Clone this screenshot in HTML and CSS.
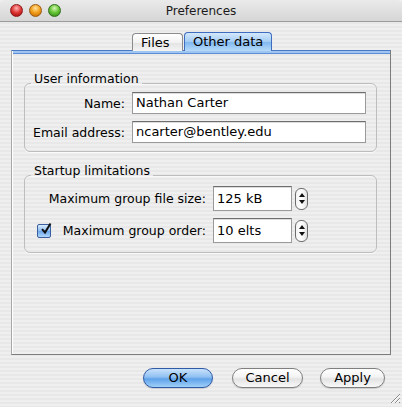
FILE: index.html
```html
<!DOCTYPE html>
<html>
<head>
<meta charset="utf-8">
<link rel="stylesheet" href="styles.css">
</head>
<body>
<div class="window">
  <div class="titlebar">
    <div class="lights">
      <span class="light red"></span>
      <span class="light orange"></span>
      <span class="light green"></span>
    </div>
    <div class="title">Preferences</div>
    <div></div>
  </div>

  <div class="tabs">
    <div class="tab">Files</div>
    <div class="tab active">Other data</div>
  </div>

  <div class="pane">
    <fieldset class="group group-user">
      <legend>User information</legend>
      <div class="form-grid">
        <label class="lbl">Name:</label>
        <div class="field">Nathan Carter</div>
        <label class="lbl">Email address:</label>
        <div class="field">ncarter@bentley.edu</div>
      </div>
    </fieldset>

    <fieldset class="group group-startup">
      <legend>Startup limitations</legend>
      <div class="limit-grid">
        <label class="lbl">Maximum group file size:</label>
        <div class="field small">125 kB</div>
        <div class="stepper"><span class="up"></span><span class="down"></span></div>

        <label class="lbl check-lbl"><span class="checkbox"><svg viewBox="0 0 14 14" width="14" height="14"><path d="M3 7.2 L6 10.5 L11.5 1.5" fill="none" stroke="#111" stroke-width="2"/></svg></span>Maximum group order:</label>
        <div class="field small">10 elts</div>
        <div class="stepper"><span class="up"></span><span class="down"></span></div>
      </div>
    </fieldset>
  </div>

  <div class="buttons">
    <button class="btn default">OK</button>
    <button class="btn cancel">Cancel</button>
    <button class="btn apply">Apply</button>
  </div>

  <div class="grip">
    <svg width="10" height="10" viewBox="0 0 10 10">
      <path d="M1 10 L10 1 M5 10 L10 5 M9 10 L10 9" stroke="#8a8a8a" stroke-width="1"/>
      <path d="M2 10 L10 2 M6 10 L10 6" stroke="#ffffff" stroke-width="1"/>
    </svg>
  </div>
</div>
</body>
</html>
```

FILE: styles.css
```css
* { box-sizing: border-box; }

html, body {
  margin: 0;
  padding: 0;
}

body {
  width: 402px;
  height: 407px;
  overflow: hidden;
  font-family: "DejaVu Sans", "Liberation Sans", sans-serif;
  font-size: 12.5px;
  color: #000;
  background: repeating-linear-gradient(to bottom, #efefef 0, #efefef 2px, #e8e8e8 2px, #e8e8e8 4px);
}

.window {
  display: flex;
  flex-direction: column;
  height: 407px;
}

/* Title bar */
.titlebar {
  height: 22px;
  display: grid;
  grid-template-columns: 1fr auto 1fr;
  align-items: center;
  background: linear-gradient(to bottom, #eaeaea, #d6d6d6);
  border-bottom: 1px solid #9c9c9c;
  border-radius: 5px 5px 0 0;
}

.lights {
  display: flex;
  gap: 6px;
  padding-left: 10px;
}

.light {
  width: 13px;
  height: 13px;
  border-radius: 50%;
  display: block;
}
.light.red {
  background: radial-gradient(circle at 50% 30%, #ffb3b3 0, #e23c3c 45%, #b51414 80%);
  border: 1px solid #8e1b1b;
}
.light.orange {
  background: radial-gradient(circle at 50% 30%, #ffe2a0 0, #f3a21e 45%, #d2780a 80%);
  border: 1px solid #9a5a10;
}
.light.green {
  background: radial-gradient(circle at 50% 30%, #d6f7b6 0, #6cc83b 45%, #3e9a1d 80%);
  border: 1px solid #2f6f19;
}

.title {
  font-size: 12px;
  color: #1a1a1a;
  line-height: 14px;
}

/* Tabs */
.tabs {
  display: flex;
  justify-content: center;
  align-items: flex-end;
  margin-top: 10px;
  padding-left: 2px;
  height: 19px;
  position: relative;
  z-index: 1;
  margin-bottom: -1px;
}

.tab {
  height: 18px;
  line-height: 17px;
  padding: 0 8px;
  border: 1px solid #8b8b8b;
  border-bottom: none;
  border-radius: 4px 4px 0 0;
  background: linear-gradient(to bottom, #ffffff, #f2f2f2 50%, #e3e3e3 51%, #f4f4f4);
  font-size: 13px;
}

.tab + .tab { margin-left: 1px; }

.tab.active {
  height: 19px;
  width: 88px;
  padding: 0 0 0 8px;
  line-height: 18px;
  border-color: #3e6cbf;
  background: linear-gradient(to bottom, #d4e8fc, #a2cbf4 50%, #80b7ef 51%, #b6dbfa);
}

.tab:first-child { width: 51px; padding-left: 8px; }

/* Pane */
.pane {
  margin-left: 11px;
  width: 380px;
  height: 305px;
  border-top: 1px solid #4a78c6;
  background:
    linear-gradient(to bottom, #9ec6f1 0, #9ec6f1 2px, #5d8dd6 2px, #5d8dd6 3px, transparent 3px);
  border-left: 1px solid #a8a8a8;
  border-right: 1px solid #7c7c7c;
  border-bottom: 1px solid #7c7c7c;
  box-shadow: inset 1px 0 0 #ffffff;
  padding: 20px 13px 0 12px;
}

/* Groups */
.group {
  margin: 0;
  border: 1px solid #bdbdbd;
  border-radius: 6px;
  box-shadow: inset 0 1px 0 #f8f8f8, 0 1px 0 #fafafa;
  min-width: 0;
}

.group legend {
  font-size: 12.5px;
  line-height: 15px;
  padding: 0 3px 9px 3px;
  margin: 0 0 -10px 6px;
}

.group-user {
  padding: 7px 8px 8px 0;
}

.group-startup {
  margin-top: 11px;
  padding: 9px 8px 9px 0;
}

.form-grid {
  display: grid;
  grid-template-columns: 100px 234px;
  column-gap: 7px;
  row-gap: 7px;
  align-items: center;
}

.lbl {
  text-align: right;
  white-space: nowrap;
}

.field {
  height: 22px;
  line-height: 20px;
  padding: 0 3px;
  background: #fff;
  border: 1px solid #9a9a9a;
  border-top-color: #6e6e6e;
  box-shadow: inset 0 1px 0 #dcdcdc;
  font-size: 13px;
  white-space: nowrap;
  overflow: hidden;
}

.field.small {
  height: 25px;
  line-height: 23px;
}

.limit-grid {
  display: grid;
  grid-template-columns: 181px 79px 13px;
  column-gap: 7px;
  row-gap: 7px;
  align-items: center;
}
.limit-grid .stepper { margin-left: -4px; }

.check-lbl {
  display: flex;
  align-items: center;
  justify-content: space-between;
  padding-left: 12px;
}

.checkbox {
  width: 14px;
  height: 14px;
  border: 1px solid #3b5f9e;
  border-radius: 2px;
  background: linear-gradient(to bottom, #d8eafd, #8dbdf0 50%, #6aa6ea 51%, #b1d7fa);
  display: block;
  position: relative;
  margin-right: 6px;
}
.checkbox svg {
  position: absolute;
  left: 1px;
  top: -3px;
}

.stepper {
  width: 13px;
  height: 22px;
  border: 1px solid #6c6c6c;
  border-radius: 6px;
  background: linear-gradient(to right, #f4f4f4, #ffffff 50%, #e2e2e2);
  display: flex;
  flex-direction: column;
  align-items: center;
  justify-content: space-around;
  padding: 3px 0;
}
.stepper .up {
  width: 0; height: 0;
  border-left: 3px solid transparent;
  border-right: 3px solid transparent;
  border-bottom: 4px solid #111;
}
.stepper .down {
  width: 0; height: 0;
  border-left: 3px solid transparent;
  border-right: 3px solid transparent;
  border-top: 4px solid #111;
}

/* Buttons */
.buttons {
  display: flex;
  justify-content: flex-end;
  margin-top: 13px;
  padding-right: 17px;
}

.btn {
  height: 20px;
  border-radius: 10px;
  font-family: "DejaVu Sans", "Liberation Sans", sans-serif;
  font-size: 13px;
  line-height: 16px;
  padding: 0;
  color: #000;
  border: 1px solid #7f7f7f;
  background: linear-gradient(to bottom, #ffffff, #f3f3f3 45%, #e2e2e2 55%, #f9f9f9);
  box-shadow: 0 1px 1px rgba(0,0,0,0.15);
}

.btn.default {
  width: 70px;
  border-color: #2f5aa6;
  background: linear-gradient(to bottom, #c9e2fb, #8fc0f2 45%, #5fa2ea 55%, #9fd0f8);
}

.btn.cancel { width: 71px; margin-left: 19px; }
.btn.apply { width: 65px; margin-left: 17px; }

.grip {
  display: flex;
  justify-content: flex-end;
  padding-right: 2px;
  margin-top: 5px;
}
```
